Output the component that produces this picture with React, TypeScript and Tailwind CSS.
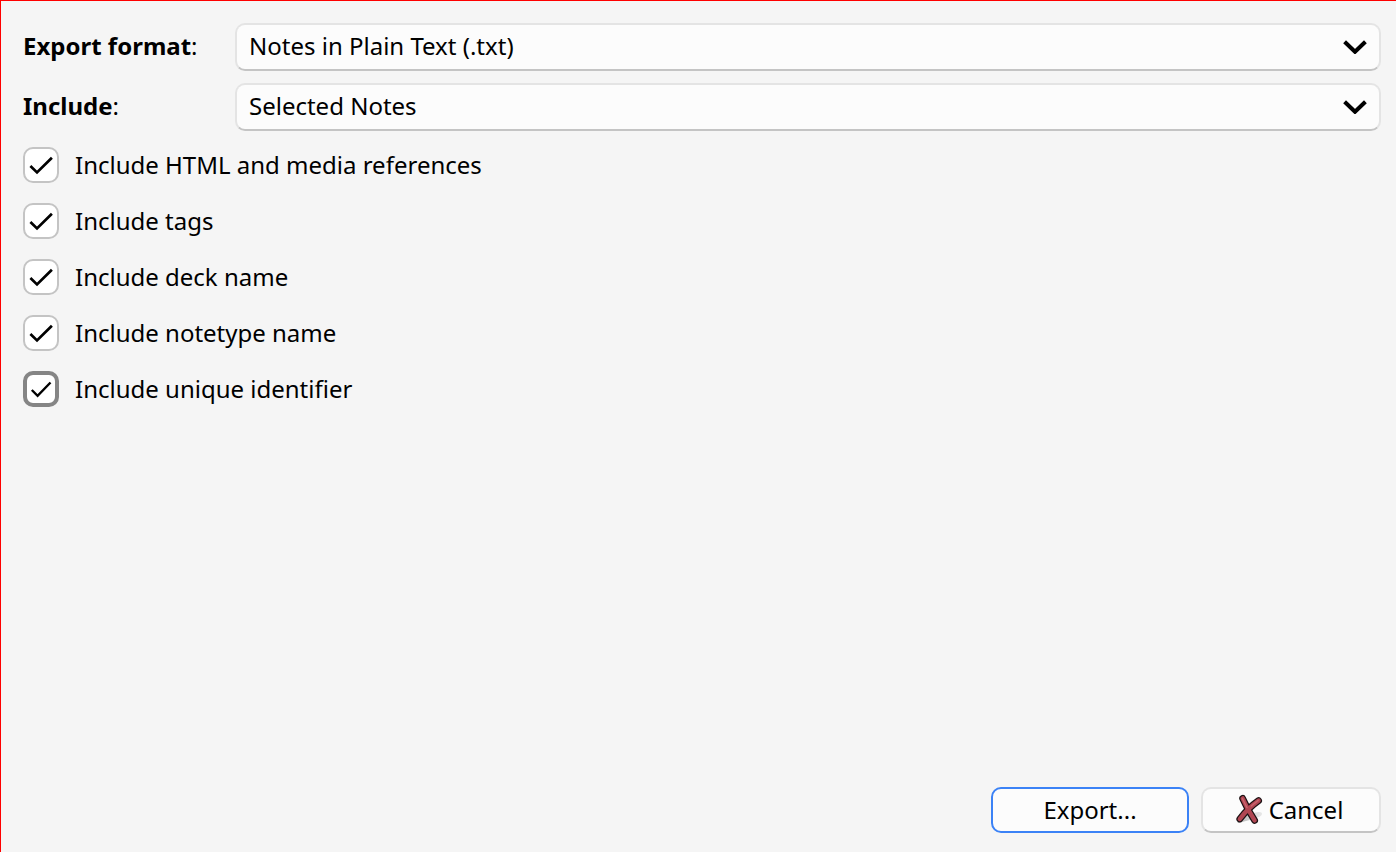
import { useState } from 'react';

type SelectRowProps = { id: string; label: string; options: string[] };

function SelectRow({ id, label, options }: SelectRowProps) {
  return (
    <div className="flex items-center">
      <label htmlFor={id} className="w-[212px] shrink-0 pb-0.5">
        <span className="font-bold">{label}</span>:
      </label>
      <div className="relative flex-1">
        <select
          id={id}
          className="block h-12 w-full appearance-none rounded-[10px] border-2 border-[#e4e4e4] border-b-[#c4c4c4] bg-[#fcfcfc] pr-14 pb-0.5 pl-3 outline-none"
        >
          {options.map((option) => (
            <option key={option}>{option}</option>
          ))}
        </select>
        <svg
          viewBox="0 0 24 14"
          className="pointer-events-none absolute top-[17px] right-[14px] h-[14px] w-6"
          fill="none"
          stroke="#000"
          strokeWidth="4"
          aria-hidden="true"
        >
          <path d="M1.6 1.7 12 11.8 22.4 1.7" />
        </svg>
      </div>
    </div>
  );
}

type CheckRowProps = { id: string; label: string; active?: boolean };

function CheckRow({ id, label, active = false }: CheckRowProps) {
  const [checked, setChecked] = useState(true);
  return (
    <div className="flex items-center gap-4">
      <div className="relative size-9">
        <input
          id={id}
          type="checkbox"
          checked={checked}
          onChange={(event) => setChecked(event.target.checked)}
          className={
            active
              ? 'block size-9 appearance-none rounded-[10px] border-4 border-[#858585] bg-white outline-none'
              : 'block size-9 appearance-none rounded-[10px] border-2 border-[#c4c4c4] bg-white outline-none'
          }
        />
        {checked && (
          <svg
            viewBox="0 0 36 36"
            className="pointer-events-none absolute inset-0 size-9"
            fill="none"
            stroke="#000"
            strokeWidth={active ? 2.4 : 2.7}
            aria-hidden="true"
          >
            {active ? (
              <path d="M8.8 19 14.6 24.8 27.5 11.5" />
            ) : (
              <path d="M7.4 19.1 14 25.4 28.9 10.7" />
            )}
          </svg>
        )}
      </div>
      <label htmlFor={id}>{label}</label>
    </div>
  );
}

function CancelIcon() {
  return (
    <svg viewBox="0 0 32 32" className="size-8" fill="none" strokeLinecap="round" aria-hidden="true">
      <defs>
        <linearGradient id="shade" x1="0" y1="0" x2="1" y2="0">
          <stop offset="0" stopColor="#999" stopOpacity="0.75" />
          <stop offset="1" stopColor="#aaa" stopOpacity="0.25" />
        </linearGradient>
      </defs>
      <path d="M4 27 13 20 26 18C30 18 30 21 26 23L17 26 5 29Z" fill="url(#shade)" />
      <g stroke="#1c1214" strokeWidth="6.8">
        <path d="M9.6 4.4Q14.4 15.4 21.6 26.4" />
        <path d="M25.6 6.6Q15 14 6.8 25" />
      </g>
      <g stroke="#b04652" strokeWidth="4.4">
        <path d="M9.6 4.4Q14.4 15.4 21.6 26.4" />
        <path d="M25.6 6.6Q15 14 6.8 25" />
      </g>
      <path d="M9.4 4.6 14 13.6M18.3 12 25.2 6.4" stroke="#c9656f" strokeWidth="1.4" />
    </svg>
  );
}

const checks = [
  { id: 'html', label: 'Include HTML and media references' },
  { id: 'tags', label: 'Include tags' },
  { id: 'deck', label: 'Include deck name' },
  { id: 'notetype', label: 'Include notetype name' },
  { id: 'guid', label: 'Include unique identifier', active: true },
];

export default function App() {
  return (
    <form
      onSubmit={(event) => event.preventDefault()}
      className="flex min-h-screen flex-col border-t border-l border-[#ff0000] bg-[#f5f5f5] pt-[22px] pr-[15px] pb-[19px] pl-[22px] font-['Noto_Sans',sans-serif] text-[24px] leading-8 text-black"
    >
      <div className="flex flex-col gap-3">
        <SelectRow id="format" label="Export format" options={['Notes in Plain Text (.txt)']} />
        <SelectRow id="include" label="Include" options={['Selected Notes']} />
      </div>
      <div className="mt-4 flex flex-col gap-5">
        {checks.map((check) => (
          <CheckRow key={check.id} {...check} />
        ))}
      </div>
      <div className="mt-auto flex justify-end gap-3">
        <button
          type="submit"
          className="h-[46px] w-[198px] rounded-[10px] border-2 border-[#3b82f6] bg-[#fcfcfc]"
        >
          Export...
        </button>
        <button
          type="button"
          className="flex h-[46px] w-[180px] items-center justify-center gap-1 rounded-[10px] border-2 border-[#e4e4e4] border-b-[#c4c4c4] bg-[#fcfcfc] pr-1.5"
        >
          <CancelIcon />
          Cancel
        </button>
      </div>
    </form>
  );
}
